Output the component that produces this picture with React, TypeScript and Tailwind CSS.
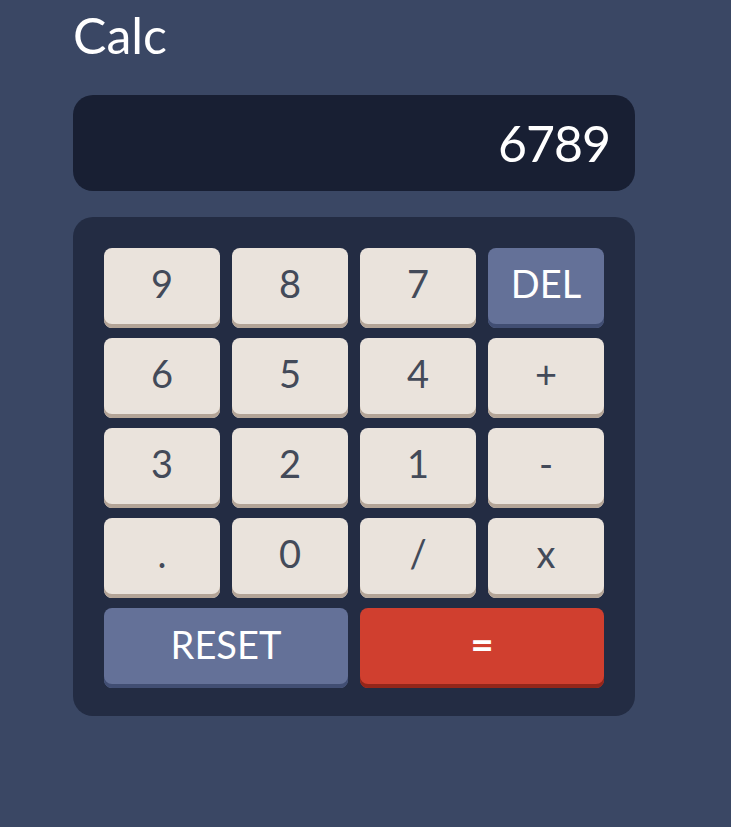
const keys: { label: string; kind?: 'del' }[] = [
  { label: '9' }, { label: '8' }, { label: '7' }, { label: 'DEL', kind: 'del' },
  { label: '6' }, { label: '5' }, { label: '4' }, { label: '+' },
  { label: '3' }, { label: '2' }, { label: '1' }, { label: '-' },
  { label: '.' }, { label: '0' }, { label: '/' }, { label: 'x' },
];

export default function App() {
  return (
    <div className="min-h-[827px] bg-[#3a4764] font-['Lato','Noto_Sans',sans-serif]">
      <div className="w-[562px] ml-[73px] pt-[6px]">
        <h1 className="text-[50px] leading-[58px] text-white">Calc</h1>

        {/* Screen */}
        <div className="mt-[31px] h-[96px] rounded-[20px] bg-[#181f33] flex items-center justify-end pr-[25px]">
          <span className="text-[50px] leading-none text-white tracking-[-1px]">6789</span>
        </div>

        {/* Keypad */}
        <div className="mt-[26px] rounded-[20px] bg-[#232c43] px-[31px] pt-[31px] pb-[28px] grid grid-cols-4 gap-x-3 gap-y-[10px]">
          {keys.map((k) =>
            k.kind === 'del' ? (
              <button key={k.label}
                className="h-[80px] pb-[10px] rounded-[8px] bg-[#647198] shadow-[inset_0_-4px_0_#414e73] text-white text-[38px] leading-none">
                {k.label}
              </button>
            ) : (
              <button key={k.label}
                className="h-[80px] pb-[10px] rounded-[8px] bg-[#eae3dc] shadow-[inset_0_-4px_0_#b3a497] text-[#434a59] text-[38px] leading-none">
                {k.label}
              </button>
            )
          )}
          <button className="col-span-2 h-[80px] pb-[8px] rounded-[8px] bg-[#647198] shadow-[inset_0_-4px_0_#414e73] text-white text-[38px] leading-none">
            RESET
          </button>
          <button className="col-span-2 h-[80px] pb-[8px] rounded-[8px] bg-[#d03f2f] shadow-[inset_0_-4px_0_#93261a] text-white text-[40px] font-bold leading-none">
            =
          </button>
        </div>
      </div>
    </div>
  );
}
